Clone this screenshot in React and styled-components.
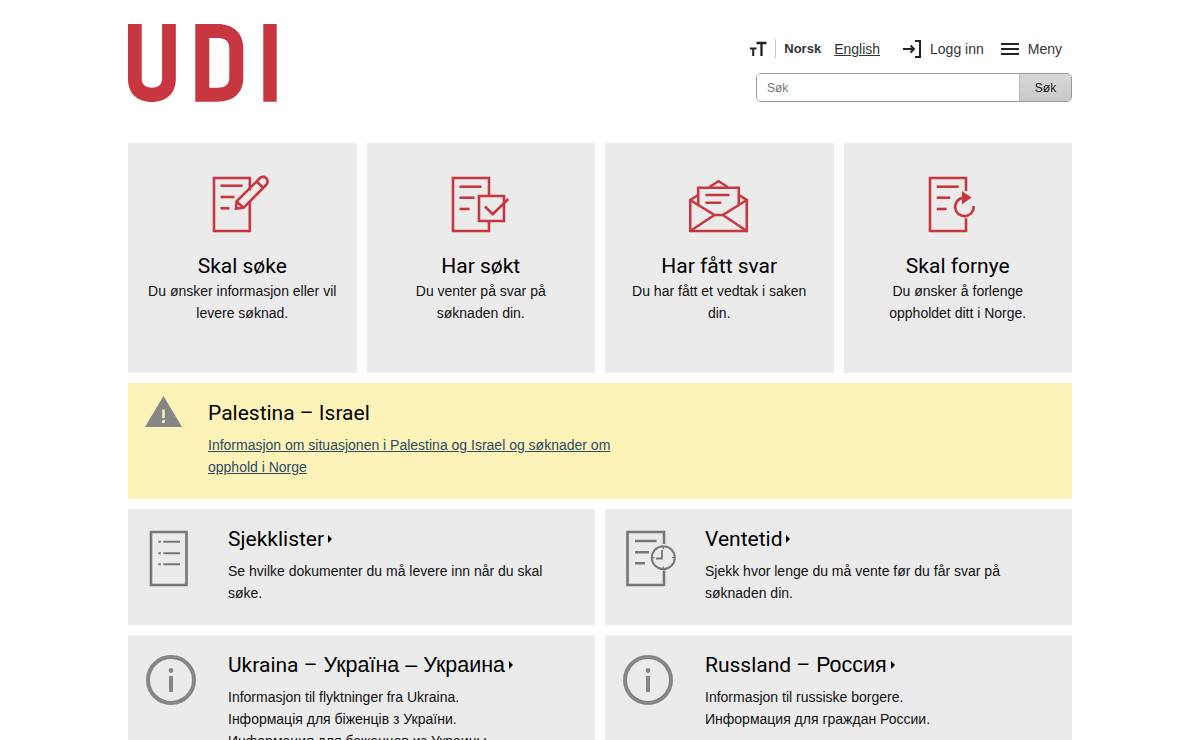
import React from "react";
import styled, { createGlobalStyle } from "styled-components";

const Global = createGlobalStyle`
  html, body { margin: 0; padding: 0; height: 740px; overflow: hidden; background: #fff; }
  body { font-family: "Liberation Sans", Arial, sans-serif; font-size: 14px; line-height: 22px; color: #111; }
`;

const Page = styled.div`
  width: 944px;
  margin: 0 auto;
`;
const Header = styled.header`
  display: flex;
  justify-content: space-between;
  padding-top: 24px;
  height: 143px;
  box-sizing: border-box;
`;
const Tools = styled.div`
  display: flex;
  flex-direction: column;
  align-items: flex-end;
  padding-top: 14px;
`;
const ToolRow = styled.div`
  display: flex;
  align-items: center;
  height: 22px;
  margin-right: 10px;
`;
const LangGroup = styled.div`
  display: flex;
  align-items: center;
  height: 20px;
`;
const Divider = styled.span`
  width: 1px;
  height: 20px;
  background: #ccc;
  margin: 0 8px;
`;
const LangActive = styled.span`
  font-weight: 700;
  font-size: 13px;
  color: #333;
`;
const LangLink = styled.a`
  color: #333;
  text-decoration: underline;
  margin-left: 13px;
  margin-right: 23px;
`;
const ToolButton = styled.span`
  display: flex;
  align-items: center;
  gap: 9px;
  color: #333;
  margin-right: ${(p) => p.$mr || 0}px;
`;
const Search = styled.form`
  display: flex;
  width: 316px;
  height: 29px;
  margin-top: 13px;
  box-sizing: border-box;
  border: 1px solid #999;
  border-radius: 5px;
  overflow: hidden;
`;
const SearchInput = styled.input`
  flex: 1;
  min-width: 0;
  border: 0;
  outline: 0;
  padding: 0 10px;
  font: 12px "Liberation Sans", Arial, sans-serif;
  &::placeholder { color: #777; opacity: 1; }
`;
const SearchButton = styled.button`
  width: 52px;
  border: 0;
  border-left: 1px solid #bbb;
  background: linear-gradient(#d8d8d8, #c9c9c9);
  font: 12px "Liberation Sans", Arial, sans-serif;
  color: #222;
  padding: 0;
`;
const FourGrid = styled.div`
  display: grid;
  grid-template-columns: repeat(4, 1fr);
  gap: 10px;
`;
const ActionCard = styled.a`
  display: flex;
  flex-direction: column;
  align-items: center;
  height: 230px;
  box-sizing: border-box;
  padding: 32px 18px 0;
  background: #ebebeb;
  text-align: center;
  color: #111;
`;
const RedIcon = styled.svg`
  width: 60px;
  height: 60px;
  flex: none;
  fill: none;
  stroke: #c8373f;
  stroke-width: 2.6;
`;
const Heading = styled.h2`
  margin: 0;
  font-family: Roboto, sans-serif;
  font-weight: 400;
  font-size: 21px;
  line-height: 28px;
  color: #000;
`;
const ActionTitle = styled(Heading)`
  margin-top: 18px;
  line-height: 26px;
`;
const Body = styled.p`
  margin: 0;
`;
const ActionBody = styled(Body)`
  margin-top: 1px;
`;
const Alert = styled.div`
  display: grid;
  grid-template-columns: 80px 1fr;
  height: 116px;
  margin-top: 10px;
  box-sizing: border-box;
  background: #fdf3b9;
  padding-top: 16px;
`;
const AlertIcon = styled.svg`
  width: 38px;
  height: 32px;
  margin: -3px 0 0 17px;
`;
const AlertLink = styled.a`
  display: block;
  max-width: 440px;
  margin-top: 7px;
  color: #2c4a66;
  text-decoration: underline;
`;
const TwoGrid = styled.div`
  display: grid;
  grid-template-columns: 1fr 1fr;
  gap: 10px;
  margin-top: 10px;
`;
const InfoCard = styled.a`
  display: grid;
  grid-template-columns: 100px 1fr;
  height: 116px;
  box-sizing: border-box;
  background: #ebebeb;
  padding: 16px 30px 0 0;
  color: #111;
`;
const GreyIcon = styled.svg`
  width: 60px;
  height: 60px;
  margin: 3px 0 0 20px;
  fill: none;
  stroke: #777;
  stroke-width: 2.6;
`;
const RoundIcon = styled.svg`
  width: 50px;
  height: 50px;
  margin: 4px 0 0 18px;
  fill: none;
  stroke: #868686;
  stroke-width: 4;
`;
const LinkTitle = styled(Heading)`
  display: flex;
  align-items: center;
  &::after {
    content: "";
    margin-left: 4px;
    border-left: 4px solid #000;
    border-top: 4px solid transparent;
    border-bottom: 4px solid transparent;
  }
`;
const Cyr = styled.span`
  font-family: "Liberation Sans", Arial, sans-serif;
  font-weight: 400;
  font-size: 21.5px;
`;
const InfoBody = styled(Body)`
  margin-top: 7px;
`;
const ToolIcon = styled.svg`
  flex: none;
  display: block;
  fill: none;
  stroke: #222;
  stroke-width: 2;
`;

const Logo = () => (
  <svg width="150" height="78" viewBox="0 0 150 78" fill="#c8373f" style={{ display: "block" }}>
    <path d="M0 0h13.7v54.5c0 6 3.5 9.2 10.2 9.2s10.2-3.2 10.2-9.2V0h13.7v55c0 14.5-9.5 23-23.9 23S0 69.500 0 55z" />
    <path fillRule="evenodd" d="M67.300 0h22c16 0 26 9 26 24v30c0 15-10 23.700-26 23.700h-22zM81.300 14v49.700h9c7 0 11-3.500 11-10V24c0-6.500-4-10-11-10z" />
    <path d="M135.300 0h13.400v77.700h-13.400z" />
  </svg>
);

const Lines = ({ x = 8.5, ys, ws }) => (
  <g>
    {ys.map((y, i) => (
      <path key={y} d={`M${x} ${y}H${x + ws[i]}`} />
    ))}
  </g>
);

const WriteIcon = () => (
  <RedIcon viewBox="0 0 60 60">
    <path d="M37.800 15.500V3H2v53h35.800V27" />
    <Lines ys={[10.700, 22, 33.300]} ws={[22, 14, 9]} />
    <path d="M24.500 26.500L47.500 3.500A4.300 4.300 0 0 1 54.500 9.500L31.500 32.800L24 33.500zM24.500 26.500L31.500 32.800M44.500 6.500L51.500 13" />
  </RedIcon>
);
const CheckIcon = () => (
  <RedIcon viewBox="0 0 60 60">
    <path d="M38 21V3H2v53h36V46" />
    <Lines ys={[11.700, 22.700, 34]} ws={[22, 15, 10]} />
    <path d="M28 21h25v25H28z" />
    <path d="M34 31.500l7.700 7.700L57.300 24" />
  </RedIcon>
);
const MailIcon = () => (
  <RedIcon viewBox="0 0 60 60">
    <path d="M9.200 31V12.700h40.600V31" />
    <path d="M20.500 12L29.500 6.200L38.800 12" />
    <path d="M9.200 20L1.200 25V56h56.600V25L49.800 20" />
    <path d="M1.200 25L25.500 40h8.300L57.800 25M1.200 56L25.500 40M57.800 56L33.800 40" />
    <path d="M16.500 20h24M16.500 27.700h15.700" />
  </RedIcon>
);
const RenewIcon = () => (
  <RedIcon viewBox="0 0 60 60">
    <path d="M38 16V3H2v53h36V43.300" />
    <Lines x={8.700} ys={[11.700, 22.700, 34]} ws={[22, 13.500, 10]} />
    <path d="M35.500 22.600A9.300 9.300 0 1 0 45.700 31" />
    <path d="M35.300 18.500l6 4.100-6 4.300z" fill="#c8373f" />
  </RedIcon>
);
const ListIcon = () => (
  <GreyIcon viewBox="0 0 60 60">
    <path d="M3 4h35.500v53H3z" />
    <path strokeWidth="2" d="M10.300 13.700h2.500M15.300 13.700H32M10.300 25.300h2.500M15.300 25.300H32M10.300 36.300h2.500M15.300 36.300H32" />
  </GreyIcon>
);
const ClockIcon = () => (
  <GreyIcon viewBox="0 0 60 60">
    <path d="M39 16V4H2.500v53H39V42.500" />
    <path d="M10 13h21.500M10 24.300h14M10 35.300h10" />
    <circle cx="38.300" cy="29.700" r="11.500" strokeWidth="2" />
    <path strokeWidth="1.300" d="M38.300 18.500v2.500M38.300 38.500v2.500M27 29.700h2.500M47 29.700h2.500" />
    <path strokeWidth="1.800" d="M37 22v8.500h-6" />
  </GreyIcon>
);
const InfoIcon = () => (
  <RoundIcon viewBox="0 0 50 50">
    <circle cx="25" cy="25" r="23" />
    <path d="M25 21v16" />
    <circle cx="25" cy="15.500" r="2.400" fill="#868686" stroke="none" />
  </RoundIcon>
);

const actions = [
  { t: "Skal søke", b: "Du ønsker informasjon eller vil levere søknad.", I: WriteIcon },
  { t: "Har søkt", b: "Du venter på svar på søknaden din.", I: CheckIcon },
  { t: "Har fått svar", b: "Du har fått et vedtak i saken din.", I: MailIcon },
  { t: "Skal fornye", b: "Du ønsker å forlenge oppholdet ditt i Norge.", I: RenewIcon },
];

export default function App() {
  return (
    <Page>
      <Global />
      <Header>
        <Logo />
        <Tools>
          <ToolRow>
            <LangGroup>
              <ToolIcon width="18" height="16" viewBox="0 0 18 16">
                <path strokeWidth="2" d="M1 7.500h6.500M4.200 7.500V15" />
                <path strokeWidth="2.300" d="M7.500 2h10M12.500 2V15" />
              </ToolIcon>
              <Divider />
              <LangActive>Norsk</LangActive>
              <LangLink>English</LangLink>
            </LangGroup>
            <ToolButton $mr={17}>
              <ToolIcon width="18" height="18" viewBox="0 0 18 18" strokeWidth="1.500">
                <path d="M0 9h11M7.500 5.500L11 9l-3.500 3.500M12 1h5v16h-5" />
              </ToolIcon>
              Logg inn
            </ToolButton>
            <ToolButton>
              <ToolIcon width="18" height="12" viewBox="0 0 18 12">
                <path d="M0 1h18M0 6h18M0 11h18" />
              </ToolIcon>
              Meny
            </ToolButton>
          </ToolRow>
          <Search>
            <SearchInput placeholder="Søk" />
            <SearchButton type="button">Søk</SearchButton>
          </Search>
        </Tools>
      </Header>

      <FourGrid>
        {actions.map(({ t, b, I }) => (
          <ActionCard key={t}>
            <I />
            <ActionTitle>{t}</ActionTitle>
            <ActionBody>{b}</ActionBody>
          </ActionCard>
        ))}
      </FourGrid>

      <Alert>
        <AlertIcon viewBox="0 0 38 32">
          <path d="M18.500 0L37 31H0z" fill="#868686" />
          <path d="M18.500 13.500v8.500M18.500 24v3" stroke="#fdf3b9" strokeWidth="2.500" />
        </AlertIcon>
        <div>
          <Heading>Palestina – Israel</Heading>
          <AlertLink>Informasjon om situasjonen i Palestina og Israel og søknader om opphold i Norge</AlertLink>
        </div>
      </Alert>

      <TwoGrid>
        <InfoCard>
          <ListIcon />
          <div>
            <LinkTitle>Sjekklister</LinkTitle>
            <InfoBody>Se hvilke dokumenter du må levere inn når du skal søke.</InfoBody>
          </div>
        </InfoCard>
        <InfoCard>
          <ClockIcon />
          <div>
            <LinkTitle>Ventetid</LinkTitle>
            <InfoBody>Sjekk hvor lenge du må vente før du får svar på søknaden din.</InfoBody>
          </div>
        </InfoCard>
      </TwoGrid>

      <TwoGrid>
        <InfoCard>
          <InfoIcon />
          <div>
            <LinkTitle>Ukraina – <Cyr>&nbsp;Україна – Украина</Cyr></LinkTitle>
            <InfoBody>
              Informasjon til flyktninger fra Ukraina.<br />
              Інформація для біженців з України.<br />
              Информация для беженцев из Украины.
            </InfoBody>
          </div>
        </InfoCard>
        <InfoCard>
          <InfoIcon />
          <div>
            <LinkTitle>Russland – <Cyr>&nbsp;Россия</Cyr></LinkTitle>
            <InfoBody>
              Informasjon til russiske borgere.<br />
              Информация для граждан России.
            </InfoBody>
          </div>
        </InfoCard>
      </TwoGrid>
    </Page>
  );
}
